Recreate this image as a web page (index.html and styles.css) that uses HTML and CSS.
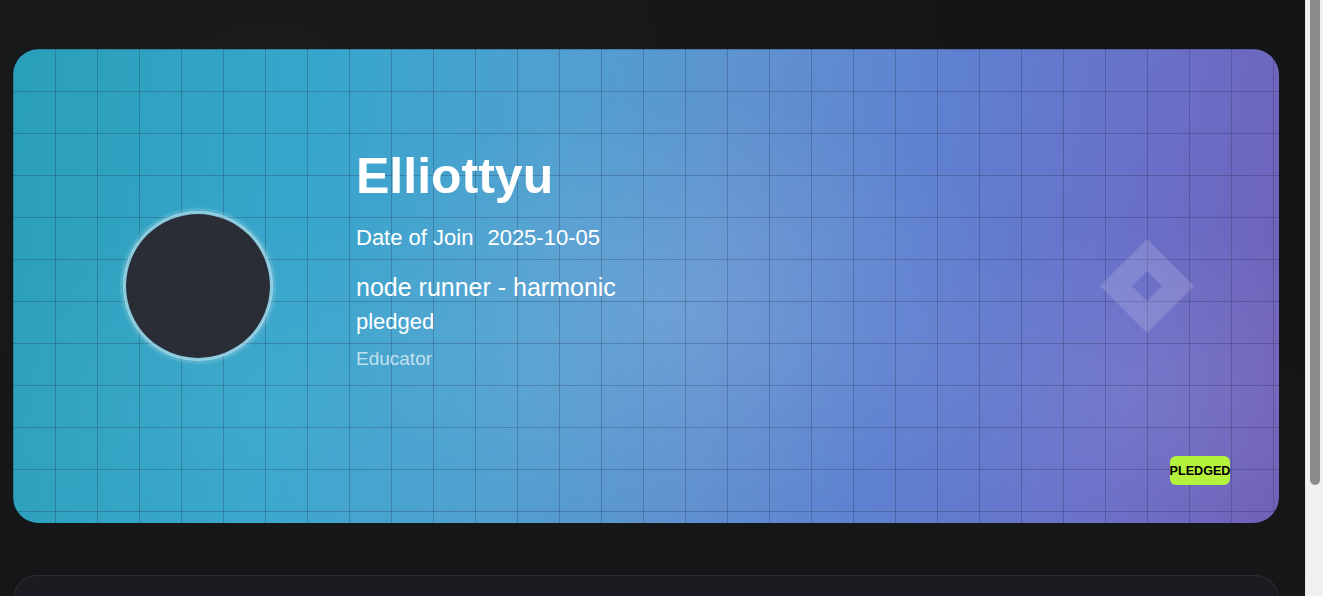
FILE: index.html
```html
<!DOCTYPE html>
<html lang="en">
<head>
<meta charset="utf-8">
<title>Profile</title>
<link rel="stylesheet" href="styles.css">
</head>
<body>
<main class="page">
  <section class="hero">
    <div class="avatar"></div>
    <div class="info">
      <h1 class="name">Elliottyu</h1>
      <p class="joined"><span>Date of Join</span><span class="date">2025-10-05</span></p>
      <p class="role">node runner - harmonic</p>
      <p class="status">pledged</p>
      <p class="title">Educator</p>
    </div>
    <svg class="emblem" width="96" height="96" viewBox="0 0 96 96" aria-hidden="true">
      <path fill-rule="evenodd" d="M48 1 L95 48 L48 95 L1 48 Z M48 33 L63 48 L48 63 L33 48 Z"/>
    </svg>
    <span class="badge">PLEDGED</span>
  </section>
  <section class="panel"></section>
</main>
<div class="scrollbar"><div class="scrollbar-thumb"></div></div>
</body>
</html>
```

FILE: styles.css
```css
* { box-sizing: border-box; }

html, body {
  margin: 0;
  padding: 0;
}

body {
  background-color: #141517;
  background-image:
    radial-gradient(ellipse at 20% 10%, rgba(255,255,255,0.025), transparent 50%),
    radial-gradient(ellipse at 80% 90%, rgba(255,255,255,0.02), transparent 50%);
  font-family: "Liberation Sans", Arial, sans-serif;
  color: #fff;
  min-height: 1000px;
}

.page {
  padding: 49px 44px 40px 13px;
  display: flex;
  flex-direction: column;
  gap: 52px;
}

.hero {
  position: relative;
  height: 474px;
  border-radius: 26px;
  overflow: hidden;
  display: flex;
  align-items: center;
  padding-left: 110px;
  background-image:
    linear-gradient(to right, rgba(25, 35, 65, 0.26) 1px, transparent 1px),
    linear-gradient(to bottom, rgba(25, 35, 65, 0.26) 1px, transparent 1px),
    radial-gradient(ellipse 28% 45% at 53% 55%, rgba(255,255,255,0.10), transparent 100%),
    radial-gradient(ellipse 22% 35% at 90% 72%, rgba(255,255,255,0.07), transparent 100%),
    radial-gradient(ellipse 30% 40% at 20% 75%, rgba(255,255,255,0.04), transparent 100%),
    linear-gradient(100deg, #2a9fb9 0%, #38a6cc 24%, #519fd0 42%, #5f92d0 55%, #5f80d0 70%, #6a6fc8 86%, #705fb7 100%);
  background-size: 42px 42px, 42px 42px, 100% 100%, 100% 100%, 100% 100%, 100% 100%;
}

.avatar {
  flex: none;
  width: 150px;
  height: 150px;
  border-radius: 50%;
  background: #2b2d36;
  background-clip: padding-box;
  border: 3px solid rgba(255, 255, 255, 0.42);
  box-shadow: 0 0 0 3px rgba(255, 255, 255, 0.10), 0 0 10px rgba(255, 255, 255, 0.12);
}

.info {
  margin-left: 83px;
  margin-bottom: 57px;
  display: flex;
  flex-direction: column;
}

.info p, .info h1 { margin: 0; }

.name {
  font-size: 50px;
  line-height: 60px;
  font-weight: 700;
}

.joined {
  margin-top: 19px !important;
  font-size: 22px;
  line-height: 26px;
}

.joined .date { margin-left: 14px; }

.role {
  margin-top: 21px !important;
  font-size: 25px;
  line-height: 30px;
}

.status {
  margin-top: 7px !important;
  font-size: 22px;
  line-height: 26px;
}

.title {
  margin-top: 13px !important;
  font-size: 19px;
  line-height: 22px;
  color: rgba(255, 255, 255, 0.68);
}

.emblem {
  position: absolute;
  right: 84px;
  top: 50%;
  margin-top: -48px;
  fill: rgba(255, 255, 255, 0.15);
}

.badge {
  position: absolute;
  right: 49px;
  bottom: 38px;
  width: 60px;
  height: 29px;
  border-radius: 6px;
  background: #b5f23d;
  color: #000;
  font-weight: 700;
  font-size: 12.6px;
  display: flex;
  align-items: center;
  justify-content: center;
  white-space: nowrap;
}

.panel {
  height: 360px;
  border-radius: 24px;
  background: #1b1c21;
  border: 1px solid rgba(255, 255, 255, 0.08);
}

.scrollbar {
  position: fixed;
  top: 0;
  right: 0;
  width: 18px;
  height: 100%;
  background: #f1f1f1;
  border-left: 1px solid #e4e4e4;
}

.scrollbar-thumb {
  margin: 0 3px 0 4px;
  height: 485px;
  border-radius: 0 0 6px 6px;
  background: #8b8b8b;
}
```
